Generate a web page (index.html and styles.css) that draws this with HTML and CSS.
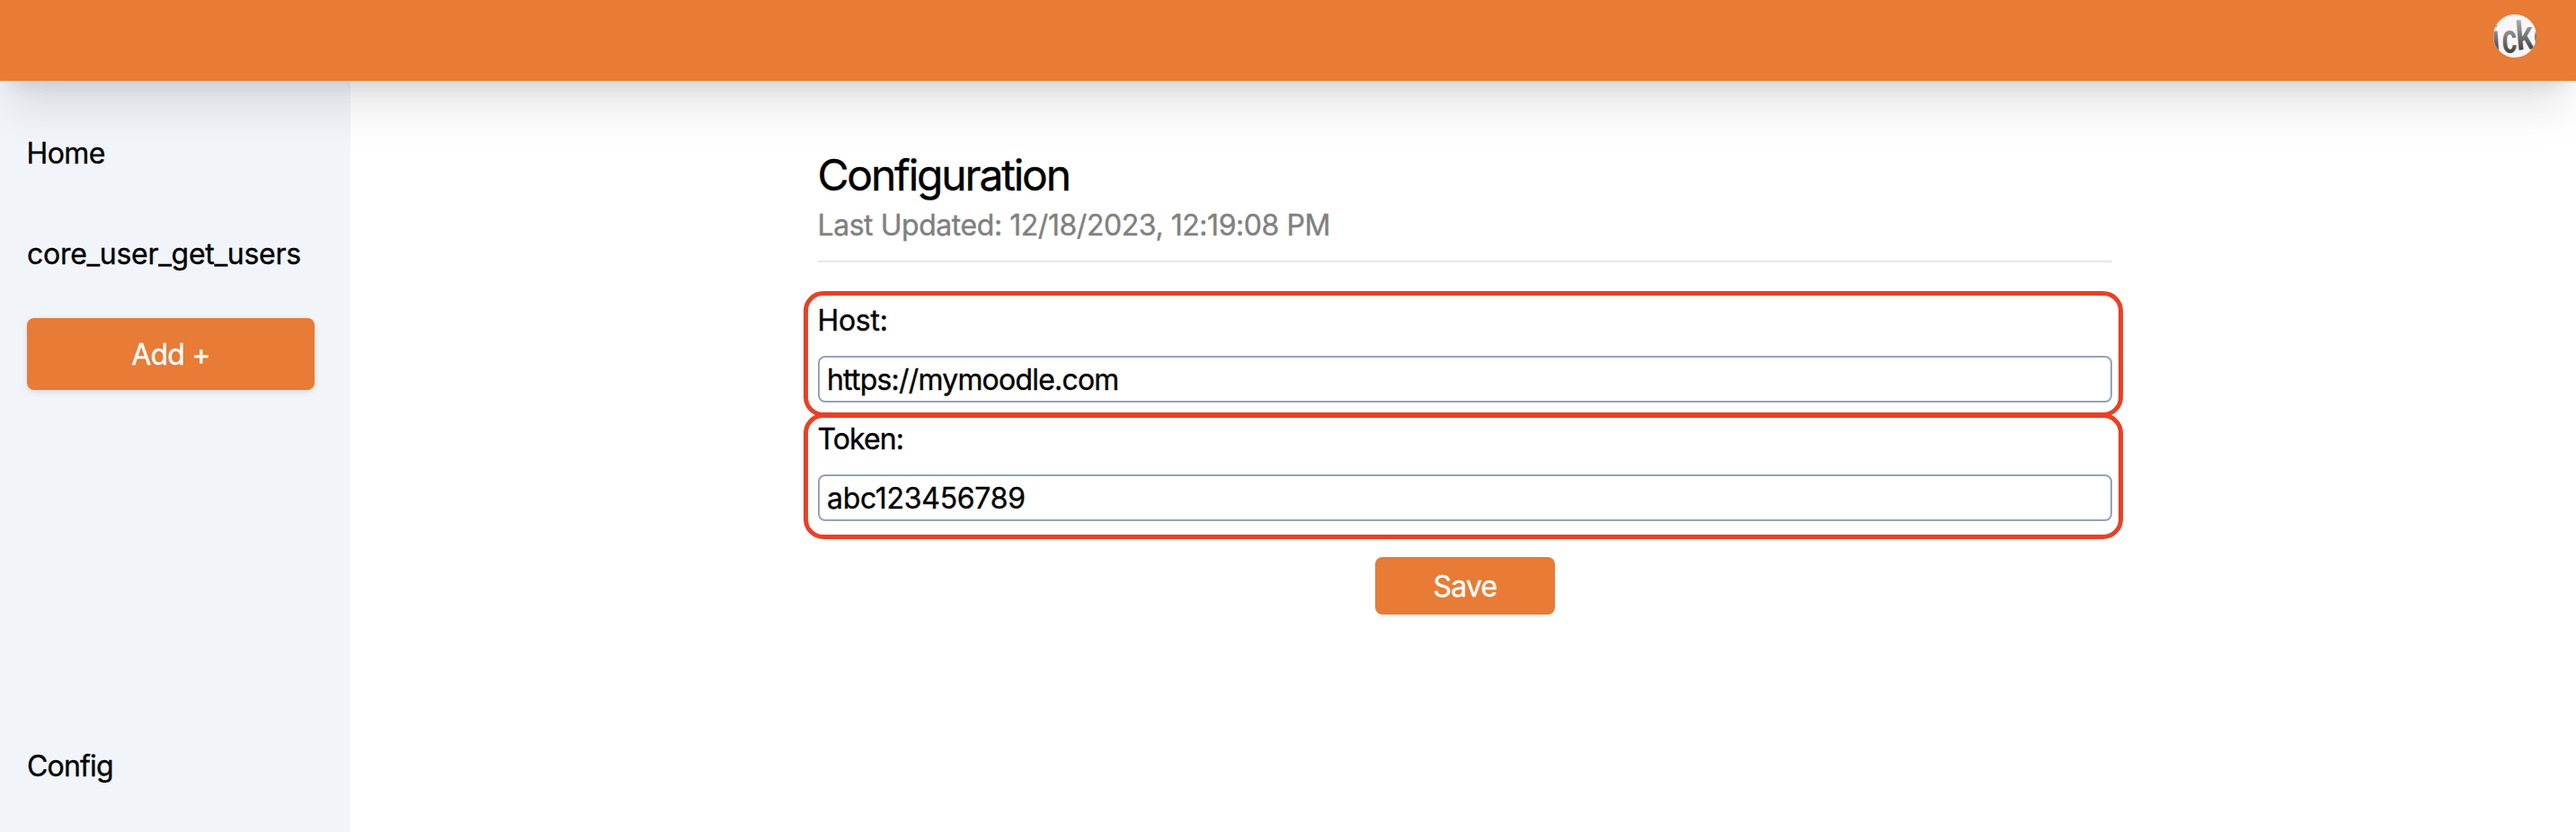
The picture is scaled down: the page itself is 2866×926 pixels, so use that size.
FILE: index.html
```html
<!DOCTYPE html>
<html lang="en">
<head>
<meta charset="utf-8">
<title>Configuration</title>
<link rel="stylesheet" href="styles.css">
</head>
<body>
<header class="topbar">
  <svg class="avatar" viewBox="0 0 48 48" role="img" aria-label="Account">
    <defs>
      <clipPath id="disc"><circle cx="24" cy="24" r="24"/></clipPath>
      <linearGradient id="pencil" x1="0" y1="0" x2="0" y2="1">
        <stop offset="0.1" stop-color="#b4b4b4"/><stop offset="0.9" stop-color="#383838"/>
      </linearGradient>
    </defs>
    <g clip-path="url(#disc)">
      <rect width="48" height="48" fill="#f8f6f6"/>
      <g class="avatar-text" fill="url(#pencil)">
        <text transform="translate(-1 42) rotate(-4) scale(.75 .95)">i</text>
        <text transform="translate(10 43) rotate(-2) scale(.66 1)">c</text>
        <text transform="translate(26 40) rotate(-5) scale(.78 1)">k</text>
        <text transform="translate(45 35) scale(.6 .8)">e</text>
      </g>
    </g>
  </svg>
</header>
<div class="shell">
  <nav class="sidebar">
    <a class="nav-link nav-home">Home</a>
    <a class="nav-link nav-core">core_user_get_users</a>
    <button class="btn btn-add">Add +</button>
    <a class="nav-link nav-bottom">Config</a>
  </nav>
  <main class="content">
    <section class="panel">
      <h1 class="title">Configuration</h1>
      <p class="updated">Last Updated: 12/18/2023, 12:19:08 PM</p>
      <div class="field field-host">
        <label class="label">Host:</label>
        <div class="input">https://mymoodle.com</div>
      </div>
      <div class="field field-token">
        <label class="label">Token:</label>
        <div class="input">abc123456789</div>
      </div>
      <button class="btn btn-save">Save</button>
    </section>
  </main>
</div>
</body>
</html>
```
FILE: styles.css
```css
* { box-sizing: border-box; }
body { margin: 0; height: 926px; display: flex; flex-direction: column; background: #fff; color: #000; font: 32px/50px Inter, "Liberation Sans", sans-serif; -webkit-text-stroke: .35px currentColor; }
.topbar { position: relative; z-index: 1; flex: none; height: 90px; padding: 16px 44px 0 0; display: flex; justify-content: flex-end; background: #e87b35; box-shadow: 0 40px 50px -10px rgba(0,0,0,.1), 0 16px 20px -12px rgba(0,0,0,.1); }
.avatar { width: 48px; height: 48px; }
.avatar-text { font: 700 46px "Liberation Sans", sans-serif; -webkit-text-stroke: 0; }
.shell { flex: 1; min-height: 0; display: flex; }
.sidebar { width: 390px; padding: 24px 40px 18px 30px; display: flex; flex-direction: column; background: #f1f5fa; }
.nav-link { height: 112px; padding-top: 32px; }
.nav-home { letter-spacing: -.6px; text-indent: -.5px; }
.nav-core { letter-spacing: -.28px; }
.nav-bottom { margin-top: auto; letter-spacing: -.8px; }
.btn { border: 0; border-radius: 8px; background: #e87b35; color: #fff; font: inherit; letter-spacing: -.8px; padding: 2px 0 0; -webkit-text-stroke: inherit; }
.btn-add { height: 80px; margin-top: 16px; box-shadow: 0 2px 6px rgba(0,0,0,.12); }
.content { flex: 1; padding: 74px 504px 0; }
.panel { display: flex; flex-direction: column; }
.title { margin: 0 12px 0 16px; height: 62px; font-size: 48px; line-height: 62px; font-weight: 400; letter-spacing: -2.2px; text-indent: -.5px; }
.updated { margin: 0 12px 32px 16px; height: 66px; border-bottom: 2px solid #e5e7eb; color: #808080; letter-spacing: -.45px; text-indent: -.5px; }
.field { border: 5px solid #ea4025; border-radius: 22px; height: 140px; padding: 0 7px 0 11px; }
.field-host { padding-top: 3px; }
.field-token { margin-top: -4px; }
.label { display: block; height: 48px; margin-bottom: 16px; letter-spacing: -.3px; text-indent: -.5px; }
.field-token .label { height: 46px; line-height: 48px; margin-bottom: 17px; letter-spacing: -.9px; }
.input { height: 52px; padding: 0 8px; border: 2px solid #94a3b8; border-radius: 8px; letter-spacing: -.8px; }
.field-token .input { letter-spacing: -.3px; }
.btn-save { align-self: center; width: 200px; height: 64px; margin: 20px 0 0 4px; }
```
